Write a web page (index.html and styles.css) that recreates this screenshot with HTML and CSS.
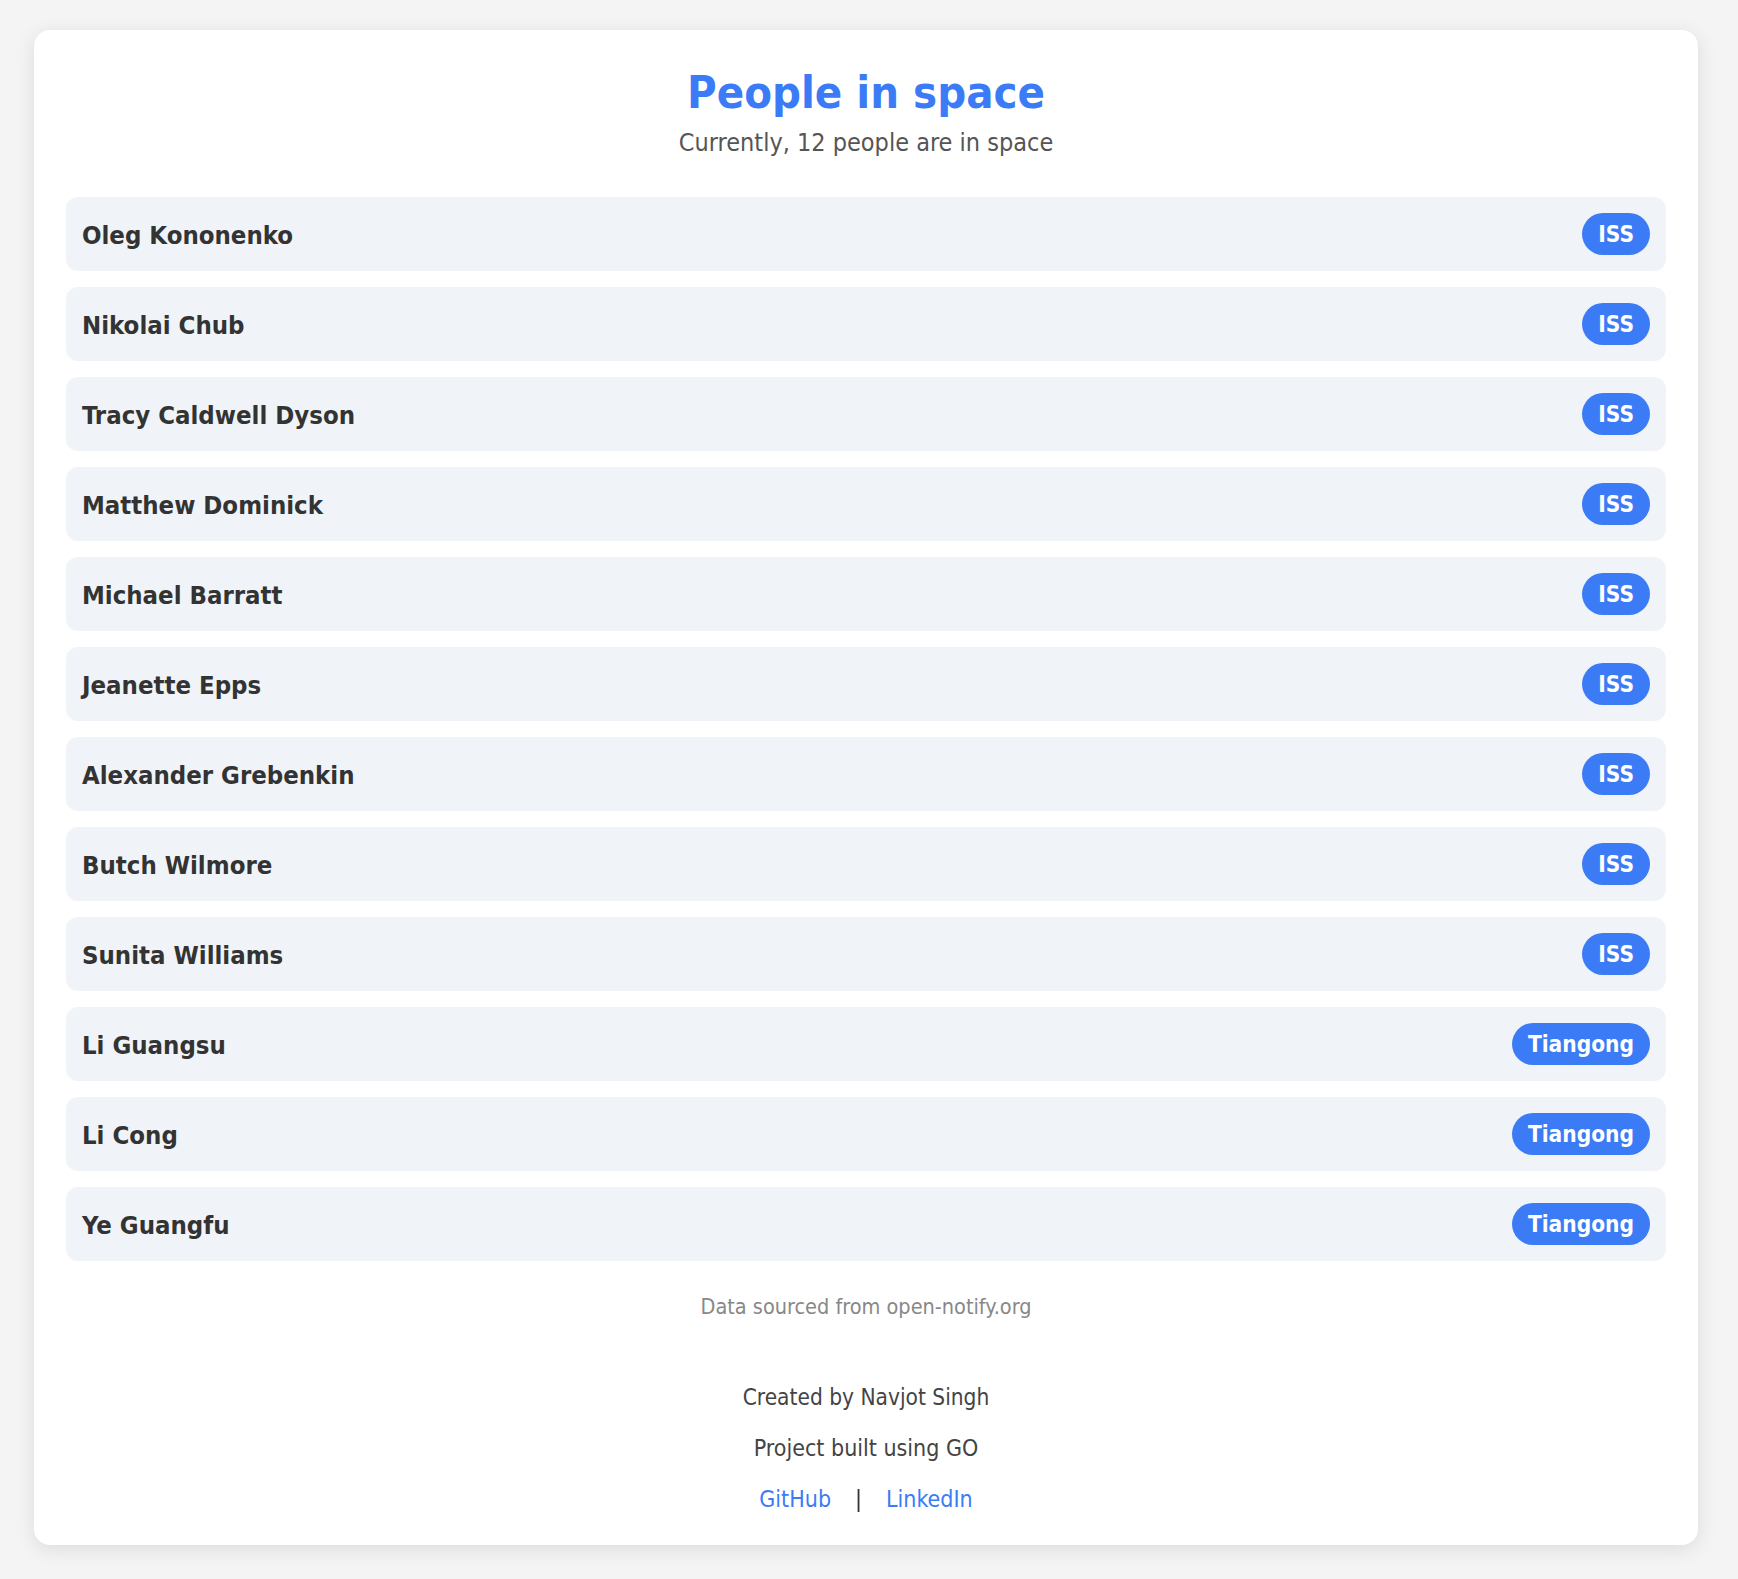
FILE: index.html
```html
<!DOCTYPE html>
<html lang="en">
<head>
<meta charset="utf-8">
<title>People in space</title>
<link rel="stylesheet" href="styles.css">
</head>
<body>
<main class="card">
  <header class="head">
    <h1 class="title">People in space</h1>
    <p class="subtitle">Currently, 12 people are in space</p>
  </header>
  <ul class="list">
    <li class="row"><span class="name">Oleg Kononenko</span><span class="badge">ISS</span></li>
    <li class="row"><span class="name">Nikolai Chub</span><span class="badge">ISS</span></li>
    <li class="row"><span class="name">Tracy Caldwell Dyson</span><span class="badge">ISS</span></li>
    <li class="row"><span class="name">Matthew Dominick</span><span class="badge">ISS</span></li>
    <li class="row"><span class="name">Michael Barratt</span><span class="badge">ISS</span></li>
    <li class="row"><span class="name">Jeanette Epps</span><span class="badge">ISS</span></li>
    <li class="row"><span class="name">Alexander Grebenkin</span><span class="badge">ISS</span></li>
    <li class="row"><span class="name">Butch Wilmore</span><span class="badge">ISS</span></li>
    <li class="row"><span class="name">Sunita Williams</span><span class="badge">ISS</span></li>
    <li class="row"><span class="name">Li Guangsu</span><span class="badge">Tiangong</span></li>
    <li class="row"><span class="name">Li Cong</span><span class="badge">Tiangong</span></li>
    <li class="row"><span class="name">Ye Guangfu</span><span class="badge">Tiangong</span></li>
  </ul>
  <p class="source">Data sourced from open-notify.org</p>
  <footer class="footer">
    <p class="line">Created by Navjot Singh</p>
    <p class="line">Project built using GO</p>
    <p class="line links"><a class="link" href="#">GitHub</a><span class="sep">|</span><a class="link" href="#">LinkedIn</a></p>
  </footer>
</main>
</body>
</html>
```
FILE: styles.css
```css
html, body {
  margin: 0;
  padding: 0;
}
body {
  background: #f4f4f4;
  font-family: "DejaVu Sans Condensed", "DejaVu Sans", Verdana, sans-serif;
  font-stretch: condensed;
  color: #333;
}
.card {
  margin: 30px 40px 34px 34px;
  padding: 32px;
  background: #ffffff;
  border-radius: 16px;
  box-shadow: 0 4px 20px rgba(0, 0, 0, 0.1);
}
.head {
  text-align: center;
}
.title {
  margin: 0;
  font-size: 45px;
  line-height: 61px;
  font-weight: bold;
  color: #3b7cf6;
}
.subtitle {
  margin: 5px 0 0;
  font-size: 25px;
  line-height: 30px;
  color: #555;
}
.list {
  list-style: none;
  margin: 39px 0 0;
  padding: 0;
  display: flex;
  flex-direction: column;
  gap: 16px;
}
.row {
  display: flex;
  justify-content: space-between;
  align-items: center;
  padding: 16px;
  background: #f0f3f8;
  border-radius: 12px;
}
.name {
  font-size: 25.5px;
  font-weight: bold;
  color: #333;
  padding-top: 1px;
}
.badge {
  background: #3b7cf6;
  color: #fff;
  font-size: 22.5px;
  font-weight: bold;
  line-height: 26px;
  padding: 8px 16px;
  border-radius: 21px;
}
.source {
  margin: 33px 0 0;
  text-align: center;
  font-size: 21.5px;
  line-height: 26px;
  color: #888;
}
.footer {
  margin-top: 64px;
  text-align: center;
  display: flex;
  flex-direction: column;
  gap: 24px;
}
.line {
  margin: 0;
  font-size: 23px;
  line-height: 27px;
  color: #444;
}
.line:first-child {
  font-size: 22.5px;
}
.link {
  color: #3b7cf6;
  text-decoration: none;
}
.sep {
  margin: 0 24px;
  color: #333;
}
```
